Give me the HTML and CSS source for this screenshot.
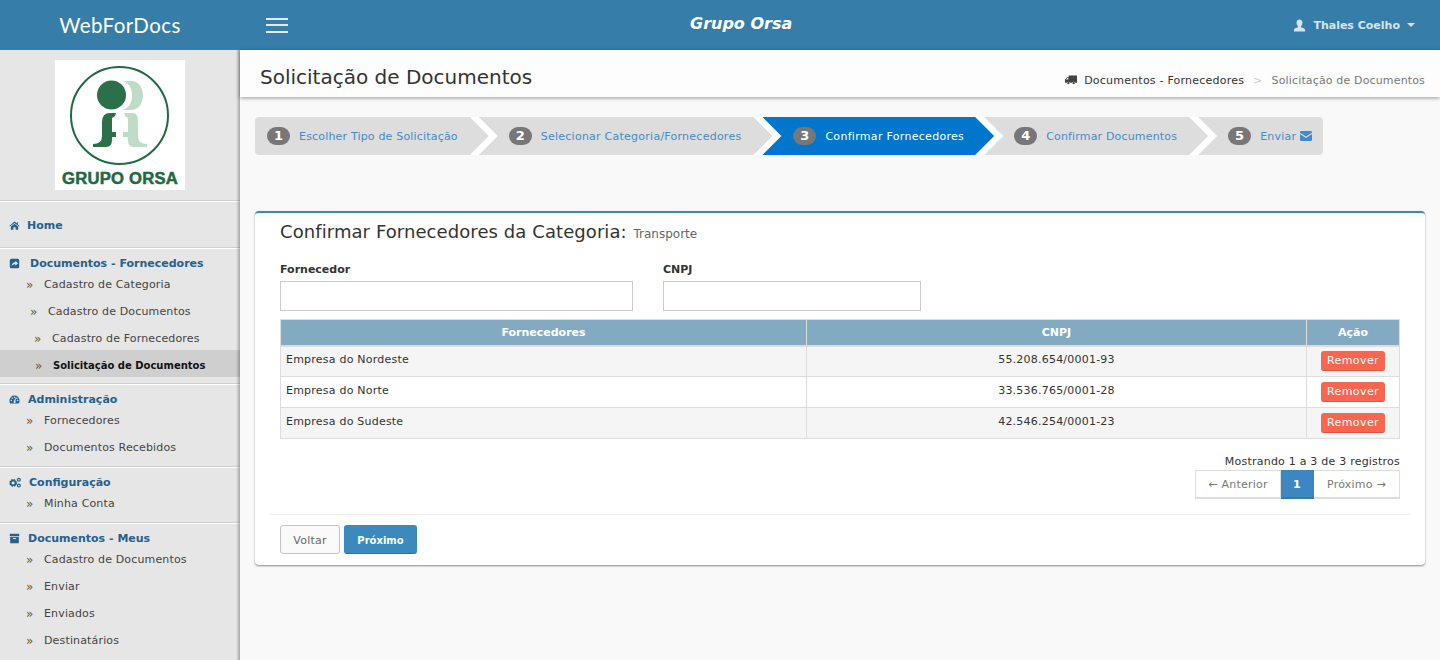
FILE: index.html
```html
<!DOCTYPE html>
<html lang="pt-BR">
<head>
<meta charset="utf-8">
<title>WebForDocs</title>
<link rel="stylesheet" href="styles.css">
</head>
<body>
<header class="topbar">
  <div class="brand">WebForDocs</div>
  <button class="burger" aria-label="Menu"><span></span><span></span><span></span></button>
  <div class="company">Grupo Orsa</div>
  <div class="user">
    <svg class="user-icon" viewBox="0 0 14 14"><path d="M7 .5c2 0 3.200 1.500 3.200 3.600 0 1.500-.7 2.900-1.500 3.500v1.300c1.800.6 4.300 1.200 4.300 3v1.600H1v-1.600c0-1.800 2.500-2.400 4.300-3V7.600C4.500 7 3.800 5.600 3.800 4.100 3.800 2 5 .5 7 .5z"/></svg>
    <span>Thales Coelho</span>
    <i class="caret"></i>
  </div>
</header>
<div class="shell">
  <aside class="sidebar">
    <div class="logo-box">
      <svg class="logo" viewBox="0 0 130 130">
        <rect width="130" height="130" fill="#fff"/>
        <circle cx="64.500" cy="55.500" r="48.500" fill="none" stroke="#1f6b40" stroke-width="2"/>
        <path d="M68 21h8c7 0 12 6 12 14.500S83 50 76 50h-8c6-2 9-8 9-14.500S74 23 68 21z" fill="#bfdcc9"/>
        <circle cx="56.500" cy="35" r="14.500" fill="#2b7049"/>
        <path d="M47 62q0-9 8-9h6l-1 3-3 2v14h4v5h-4v3q0 7-6 7H38v-3q9 0 9-8z" fill="#2b7049"/>
        <path d="M69 53h9q5 0 5 9v14q0 8 9 8v3H78q-5 0-5-7v-3h-5v-5h5V58l-3-2z" fill="#bfdcc9"/>
        <text class="logo-text" x="7" y="123.500" textLength="116" lengthAdjust="spacingAndGlyphs">GRUPO ORSA</text>
      </svg>
    </div>
    <nav>
      <div class="nav-group nav-home">
        <a class="nav-head nav-head-home"><svg class="nav-icon" viewBox="0 0 14 12"><path d="M7 1 .5 6.500l.8.9L7 2.700l5.700 4.700.8-.9-2.300-1.900V1.500H10.300v1.600zM2.300 7.500V11.500h3.300V8.300h2.800v3.200h3.300V7.500L7 3.700z"/></svg>Home</a>
      </div>
      <div class="nav-group nav-group-docs">
        <a class="nav-head nav-head-wide"><svg class="nav-icon" viewBox="0 0 14 14"><path d="M3 1h8a2 2 0 0 1 2 2v8a2 2 0 0 1-2 2H3a2 2 0 0 1-2-2V3a2 2 0 0 1 2-2zm5 2.500v2C5.500 5.500 3.500 7 3.500 10.500 4.500 8.800 6 8 8 8v2l3.500-3.300z" fill-rule="evenodd"/></svg>Documentos - Fornecedores</a>
        <a class="nav-item"><b class="arrows">»</b>Cadastro de Categoria</a>
        <a class="nav-item nav-indent-1"><b class="arrows">»</b>Cadastro de Documentos</a>
        <a class="nav-item nav-indent-2"><b class="arrows">»</b>Cadastro de Fornecedores</a>
        <a class="nav-item nav-active"><b class="arrows">»</b>Solicitação de Documentos</a>
      </div>
      <div class="nav-group">
        <a class="nav-head"><svg class="nav-icon" viewBox="0 0 14 12"><path d="M7 1a6.500 6.500 0 0 0-6.500 6.500c0 1.300.4 2.600 1.100 3.600h10.800c.7-1 1.100-2.300 1.100-3.600A6.500 6.500 0 0 0 7 1zM3 8.300a1 1 0 1 1 0-2 1 1 0 0 1 0 2zm1-3a1 1 0 1 1 0-2 1 1 0 0 1 0 2zm3-1.200a1 1 0 1 1 0-2 1 1 0 0 1 0 2zm1 5.900a1.300 1.300 0 0 1-2.300-.8L8.300 3.500l.4.100-.5 4.700c.3.300.3 1.200-.2 1.700zM10 5.300a1 1 0 1 1 0-2 1 1 0 0 1 0 2zm1 3a1 1 0 1 1 0-2 1 1 0 0 1 0 2z" fill-rule="evenodd"/></svg>Administração</a>
        <a class="nav-item"><b class="arrows">»</b>Fornecedores</a>
        <a class="nav-item"><b class="arrows">»</b>Documentos Recebidos</a>
      </div>
      <div class="nav-group">
        <a class="nav-head nav-head-cfg"><svg class="nav-icon" viewBox="0 0 14 12"><circle cx="4.800" cy="6.500" r="3.300" fill="none" stroke-width="2.400" stroke-dasharray="1.800 .8" stroke="currentColor"/><circle cx="4.800" cy="6.500" r="2.800" fill="none" stroke-width="1.800" stroke="currentColor"/><circle cx="11.500" cy="2.800" r="1.700" fill="none" stroke-width="1.400" stroke="currentColor"/><circle cx="11.500" cy="9.500" r="1.700" fill="none" stroke-width="1.400" stroke="currentColor"/></svg>Configuração</a>
        <a class="nav-item"><b class="arrows">»</b>Minha Conta</a>
      </div>
      <div class="nav-group">
        <a class="nav-head"><svg class="nav-icon" viewBox="0 0 14 12"><path d="M1 0h12v3H1zM1.500 4h11v8h-11zM5 5.500v1h4v-1z" fill-rule="evenodd"/></svg>Documentos - Meus</a>
        <a class="nav-item"><b class="arrows">»</b>Cadastro de Documentos</a>
        <a class="nav-item"><b class="arrows">»</b>Enviar</a>
        <a class="nav-item"><b class="arrows">»</b>Enviados</a>
        <a class="nav-item"><b class="arrows">»</b>Destinatários</a>
      </div>
    </nav>
  </aside>
  <main class="main">
    <div class="page-head">
      <h1>Solicitação de Documentos</h1>
      <div class="crumbs">
        <svg class="truck" viewBox="0 0 13 10"><path d="M4 0h9v8H10.800a1.500 1.500 0 0 0-2.900 0H5.100a1.500 1.500 0 0 0-2.900 0H0V4.500L2.200 2H4zM1 4.500h2.500V2.800H2.500z" fill-rule="evenodd"/><circle cx="3.600" cy="8.500" r="1.200"/><circle cx="9.400" cy="8.500" r="1.200"/></svg>
        <span class="crumb-link">Documentos - Fornecedores</span>
        <span class="crumb-sep">&gt;</span>
        <span class="crumb-now">Solicitação de Documentos</span>
      </div>
    </div>
    <div class="content">
      <ol class="steps">
        <li class="step step-first"><span class="num">1</span>Escolher Tipo de Solicitação</li>
        <li class="step step-second"><span class="num">2</span>Selecionar Categoria/Fornecedores</li>
        <li class="step step-current"><span class="num">3</span>Confirmar Fornecedores</li>
        <li class="step step-fourth"><span class="num">4</span>Confirmar Documentos</li>
        <li class="step step-last"><span class="num">5</span>Enviar<svg class="mail" viewBox="0 0 12 10"><path d="M0 1.200A1.200 1.200 0 0 1 1.200 0h9.600A1.200 1.200 0 0 1 12 1.200v.5L6 5.600 0 1.700zM0 3l6 3.900L12 3v5.800A1.200 1.200 0 0 1 10.800 10H1.200A1.200 1.200 0 0 1 0 8.800z"/></svg></li>
      </ol>
      <section class="card">
        <h2>Confirmar Fornecedores da Categoria: <small>Transporte</small></h2>
        <div class="filters">
          <label class="field field-name">Fornecedor<input type="text"></label>
          <label class="field field-cnpj">CNPJ<input type="text"></label>
        </div>
        <table class="grid">
          <colgroup><col class="col-name"><col class="col-cnpj"><col class="col-act"></colgroup>
          <thead><tr><th>Fornecedores</th><th>CNPJ</th><th>Ação</th></tr></thead>
          <tbody>
            <tr><td>Empresa do Nordeste</td><td class="center">55.208.654/0001-93</td><td class="center"><button class="btn-remove">Remover</button></td></tr>
            <tr><td>Empresa do Norte</td><td class="center">33.536.765/0001-28</td><td class="center"><button class="btn-remove">Remover</button></td></tr>
            <tr><td>Empresa do Sudeste</td><td class="center">42.546.254/0001-23</td><td class="center"><button class="btn-remove">Remover</button></td></tr>
          </tbody>
        </table>
        <div class="table-foot">
          <div class="info">Mostrando 1 a 3 de 3 registros</div>
          <div class="pager">
            <a class="page">← Anterior</a><a class="page page-on">1</a><a class="page">Próximo →</a>
          </div>
        </div>
        <div class="actions">
          <button class="btn btn-back">Voltar</button>
          <button class="btn btn-next">Próximo</button>
        </div>
      </section>
    </div>
  </main>
</div>
</body>
</html>
```
FILE: styles.css
```css
* { box-sizing: border-box; }
html, body { margin: 0; height: 660px; overflow: hidden; }
body { font-family: "DejaVu Sans", Verdana, sans-serif; font-size: 11px; color: #333; background: #f9f9f9; letter-spacing: .22px; }
a { color: inherit; text-decoration: none; }

.topbar { height: 50px; background: #377daa; color: #fff; display: flex; align-items: center; position: relative; letter-spacing: 0; }
.brand { width: 240px; text-align: center; font-family: "Lato", sans-serif; font-size: 20.500px; letter-spacing: .4px; }
.burger { margin-left: 26px; width: 22px; height: 15px; padding: 0; border: 0; background: none; display: flex; flex-direction: column; justify-content: space-between; }
.burger span { display: block; height: 2px; background: #dfeaf2; }
.company { position: absolute; left: 690px; top: 14px; font-size: 16px; font-weight: 700; font-style: italic; line-height: 20px; }
.user { margin-left: auto; margin-right: 25px; display: flex; align-items: center; font-size: 11px; font-weight: 700; color: #d5e4ee; }
.user-icon { width: 13px; height: 13px; fill: #d5e4ee; margin-right: 7px; }
.caret { margin-left: 7px; border: 4px solid transparent; border-top-color: #d5e4ee; border-bottom: 0; }

.shell { display: flex; height: 610px; }
.sidebar { width: 240px; flex: none; background: #e6e6e6; position: relative; }
.sidebar::after { content: ""; position: absolute; top: 0; bottom: 0; right: 0; width: 4px; background: linear-gradient(to right, rgba(0,0,0,0), rgba(0,0,0,.28)); }
.logo-box { height: 150px; padding-top: 10px; display: flex; justify-content: center; }
.logo { width: 130px; height: 130px; display: block; }
.logo-text { font-family: "Liberation Sans", Arial, sans-serif; font-size: 16px; font-weight: 700; fill: #1f6b40; stroke: #1f6b40; stroke-width: .5px; }

.nav-group { border-top: 1px solid #cfcfcf; box-shadow: inset 0 1px 0 #fff; padding: 6px 0 7px; }
.nav-group-docs { padding-bottom: 6px; }
.nav-home { height: 47px; padding: 15px 0 0; }
.nav-head { display: flex; align-items: center; height: 15px; padding: 4px 0 0 9px; font-size: 11px; font-weight: 700; color: #25608f; letter-spacing: 0; }
.nav-home .nav-head { height: 18px; padding-top: 0; }
.nav-icon { width: 11px; height: 11px; fill: #25608f; margin-right: 8px; flex: none; color: #25608f; }
.nav-head-home .nav-icon { margin-right: 7px; }
.nav-head-wide .nav-icon { margin-right: 10px; }
.nav-head-cfg .nav-icon { width: 12px; margin-right: 8px; }
.nav-item { display: flex; align-items: center; height: 27px; padding: 4px 0 0 26px; color: #444; letter-spacing: .15px; }
.arrows { width: 18px; flex: none; font-size: 12px; font-weight: 400; color: #6b5a2a; }
.nav-indent-1 { padding-left: 30px; }
.nav-indent-2 { padding-left: 34px; }
.nav-active { padding-left: 35px; background: #cfcfcf; color: #111; font-size: 10px; font-weight: 700; letter-spacing: 0; }

.main { flex: 1; min-width: 0; }
.page-head { height: 47px; background: #fdfdfd; box-shadow: 0 1px 4px rgba(0,0,0,.4); display: flex; justify-content: space-between; padding: 0 15px 0 20px; position: relative; }
.page-head h1 { margin: 13px 0 0; font-size: 20px; line-height: 28px; font-weight: 400; color: #333; letter-spacing: 0; }
.crumbs { display: flex; align-items: center; height: 16px; margin-top: 22px; color: #333; }
.truck { width: 12px; height: 10px; fill: #444; margin-right: 7px; }
.crumb-sep { color: #ccc; margin: 0 9px; }
.crumb-now { color: #777; letter-spacing: .15px; }

.content { padding: 20px 15px 0; }
.steps { list-style: none; margin: 0; padding: 0; display: inline-flex; height: 38px; background: #fff; border-radius: 4px; vertical-align: top; }
.step { display: flex; align-items: center; height: 38px; padding: 0 31px 0 30px; margin-left: -10px; background: #ddd; color: #428bca; clip-path: polygon(0 0, calc(100% - 19px) 0, 100% 50%, calc(100% - 19px) 100%, 0 100%, 19px 50%); }
.step-first { margin-left: 0; padding-left: 12px; border-radius: 4px 0 0 4px; letter-spacing: .18px; clip-path: polygon(0 0, calc(100% - 19px) 0, 100% 50%, calc(100% - 19px) 100%, 0 100%); }
.step-second { letter-spacing: .25px; }
.step-fourth { letter-spacing: .17px; }
.step-last { padding-right: 11px; border-radius: 0 4px 4px 0; clip-path: polygon(0 0, 100% 0, 100% 100%, 0 100%, 19px 50%); }
.step-current { padding: 0 30px 0 31px; background: #0077cc; color: #fff; letter-spacing: .3px; }
.num { width: 23px; height: 18px; margin-right: 9px; border-radius: 9px; background: #777; color: #fff; font-size: 13px; font-weight: 700; text-align: center; line-height: 18px; letter-spacing: 0; }
.mail { width: 12px; height: 10px; fill: #428bca; margin-left: 4px; }

.card { margin-top: 56px; height: 354px; background: #fff; border-top: 2px solid #3b8bbd; border-radius: 4px; box-shadow: 0 1px 2px rgba(0,0,0,.45); padding: 0 25px; }
.card h2 { margin: 0; padding-top: 6px; font-size: 18px; line-height: 26px; font-weight: 400; color: #333; letter-spacing: .08px; }
.card small { margin-left: 1px; font-size: 12px; color: #666; letter-spacing: 0; }
.filters { display: flex; margin-top: 17px; }
.field { display: flex; flex-direction: column; font-weight: 700; line-height: 12px; color: #333; gap: 5px; letter-spacing: 0; }
.field input { height: 30px; padding: 0 6px; border: 1px solid #ccc; background: #fff; }
.field-name { width: 353px; margin-right: 30px; }
.field-cnpj { width: 258px; }

.grid { width: 1119px; margin-top: 8px; border-collapse: collapse; table-layout: fixed; color: #333; }
.col-name { width: 526px; }
.col-cnpj { width: 500px; }
.col-act { width: 93px; }
.grid th, .grid td { border: 1px solid #ddd; }
.grid th { height: 26px; background: #84aac1; color: #fff; font-weight: 700; padding: 0; border-bottom-width: 2px; letter-spacing: 0; }
.grid td { height: 31px; padding: 0 5px 4px; }
.grid tbody tr:nth-child(odd) { background: #f5f5f5; }
.grid td.center { text-align: center; }
.btn-remove { display: block; width: 64px; height: 20px; margin: 3px auto 0; padding: 0; border: 0; border-bottom: 1px solid #e0553f; border-radius: 3px; background: #f96650; color: #fff; font: 11px "DejaVu Sans", Verdana, sans-serif; letter-spacing: .4px; }

.table-foot { display: flex; flex-direction: column; align-items: flex-end; margin-top: 16px; }
.info { line-height: 14px; color: #333; }
.pager { display: flex; margin-top: 1px; }
.page { width: 86px; height: 29px; line-height: 27px; text-align: center; border: 1px solid #ddd; border-bottom-width: 2px; border-left-width: 0; color: #777; }
.page:first-child { border-left-width: 1px; }
.page-on { width: 33px; background: #3c87c2; border-color: #3c87c2; border-bottom-color: #3579ad; color: #fff; font-weight: 700; }

.actions { margin: 15px -10px 0; padding: 10px 10px 0; border-top: 1px solid #f0f0f0; display: flex; gap: 4px; }
.btn { height: 29px; padding: 1px 0 0; border-radius: 3px; font: 11px "DejaVu Sans", Verdana, sans-serif; letter-spacing: .22px; }
.btn-back { width: 60px; background: #fafafa; border: 1px solid #c4c4c4; color: #666; }
.btn-next { width: 73px; background: #3b8abb; border: 1px solid #3b8abb; border-bottom-color: #2f74a0; color: #fff; font-size: 10px; font-weight: 700; letter-spacing: 0; }
```
